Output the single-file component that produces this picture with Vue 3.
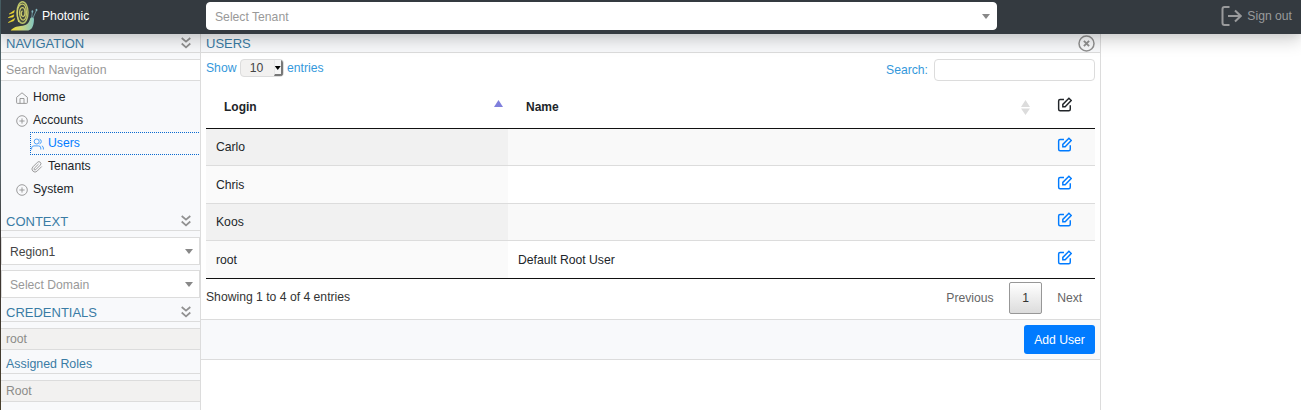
<script setup>
const rows = [
  { login: 'Carlo', name: '' },
  { login: 'Chris', name: '' },
  { login: 'Koos', name: '' },
  { login: 'root', name: 'Default Root User' },
]
const nav = [
  { label: 'Home', icon: 'home' },
  { label: 'Accounts', icon: 'plus' },
  { label: 'Users', icon: 'users', child: true, active: true },
  { label: 'Tenants', icon: 'clip', child: true },
  { label: 'System', icon: 'plus' },
]
</script>

<template>
  <div class="app">
    <header class="topbar">
      <svg class="logo" width="31" height="32" viewBox="7.300 0 31 32" fill="none">
        <defs>
          <linearGradient id="body" x1="0" y1="0" x2="1" y2="0">
            <stop offset="0" stop-color="#f2dc2e" />
            <stop offset="0.5" stop-color="#c5d585" />
            <stop offset="1" stop-color="#82c5c0" />
          </linearGradient>
        </defs>
        <ellipse cx="21.800" cy="12.500" rx="5.500" ry="10.800" fill="#454c40" stroke="#b9c26a" stroke-width="1.400" />
        <path d="M18 22C15.500 15 16 5 21.500 4C26.500 4 27 18 23 20C18.500 21 17.500 8.500 21.500 7.500C25 7.500 25 16 22.500 16.500C20 16.500 20 11 22 11" stroke="#cfce6c" stroke-width="1.200" />
        <path d="M10 30.600C12 27.500 16 26.500 20 26C26 25.500 28 23.500 29.500 18.500C30.500 16.500 33.500 17 33.300 19.500C33 26.500 31 30.600 26 30.600Z" fill="url(#body)" />
        <path d="M31 18L31.700 11.500M32.300 18L35.600 10.500" stroke="#6f9ba3" stroke-width=".9" />
        <ellipse cx="31.700" cy="11.500" rx=".9" ry="1.300" fill="#82b5bd" />
        <ellipse cx="35.800" cy="10" rx=".9" ry="1.300" fill="#82b5bd" />
        <path d="M8.500 14L13.700 10.500L13 12.700ZM7.600 17.600L13.200 14.800L12.500 17ZM7.600 22.500L14 18.500L13 20.800Z" fill="#efd832" stroke="#efd832" stroke-width=".6" />
      </svg>
      <span class="brand">Photonic</span>
      <div class="select tenant"><span>Select Tenant</span><i class="caret"></i></div>
      <a class="signout">
        <svg width="21" height="20" viewBox="0 0 21 20" fill="none" stroke="currentColor" stroke-width="2">
          <path d="M8.500 1H3.500Q1.500 1 1.500 3V17Q1.500 19 3.500 19H8.500M7 10H19.500M14 4.500L19.700 10L14 15.500" />
        </svg>
        <span>Sign out</span>
      </a>
    </header>

    <div class="columns">
      <aside class="sidebar">
        <h2 class="heading">
          NAVIGATION
          <svg class="chev" width="10" height="12" viewBox="0 0 10 12"><path d="M.7 1L5 4.700L9.300 1M.7 6.500L5 10.300L9.300 6.500" /></svg>
        </h2>
        <div class="field search-nav">Search Navigation</div>
        <nav class="tree">
          <a v-for="n in nav" :key="n.label" :class="['node', { child: n.child, active: n.active }]">
            <svg v-if="n.icon === 'home'" class="ico" width="12" height="12" viewBox="0 0 12 12">
              <path d="M.6 5.300L6 .8L11.400 5.300V10.500Q11.400 11.400 10.500 11.400H1.500Q.6 11.400 .6 10.500ZM4 11.400V6.500H8V11.400" />
            </svg>
            <svg v-else-if="n.icon === 'plus'" class="ico" width="12" height="12" viewBox="0 0 12 12">
              <circle cx="6" cy="6" r="5.300" /><path d="M6 3.400V8.600M3.400 6H8.600" />
            </svg>
            <svg v-else-if="n.icon === 'users'" class="ico" width="13" height="12" viewBox="0 0 13 12">
              <circle cx="5.700" cy="3.500" r="2.500" />
              <path d="M.6 11.500V10Q.6 7.900 3 7.900H7.400Q9.800 7.900 9.800 10V11.500M8.500 1.100A2.500 2.500 0 0 1 8.500 5.900M10.800 7.900Q12.400 8.400 12.400 10V11.500" />
            </svg>
            <svg v-else class="ico" width="12" height="12" viewBox="0 0 24 24">
              <path class="clip" d="M21.440 11.050L12.250 20.240A6 6 0 0 1 3.760 11.750L12.950 2.560A4 4 0 0 1 18.610 8.220L9.410 17.410A2 2 0 0 1 6.580 14.580L15.070 6.100" />
            </svg>
            <span>{{ n.label }}</span>
          </a>
        </nav>
        <h2 class="heading">
          CONTEXT
          <svg class="chev" width="10" height="12" viewBox="0 0 10 12"><path d="M.7 1L5 4.700L9.300 1M.7 6.500L5 10.300L9.300 6.500" /></svg>
        </h2>
        <div class="select region"><span class="value">Region1</span><i class="caret"></i></div>
        <div class="select domain"><span>Select Domain</span><i class="caret"></i></div>
        <h2 class="heading cred">
          CREDENTIALS
          <svg class="chev" width="10" height="12" viewBox="0 0 10 12"><path d="M.7 1L5 4.700L9.300 1M.7 6.500L5 10.300L9.300 6.500" /></svg>
        </h2>
        <div class="field disabled">root</div>
        <h3 class="roles">Assigned Roles</h3>
        <div class="field disabled">Root</div>
      </aside>

      <main class="panel">
        <h2 class="heading">
          USERS
          <svg class="close" width="17" height="17" viewBox="0 0 17 17" fill="none" stroke="#919191" stroke-width="1.500">
            <circle cx="8.500" cy="8.500" r="7.500" />
            <path stroke-width="1.900" d="M5.900 5.900L11.100 11.100M11.100 5.900L5.900 11.100" />
          </svg>
        </h2>
        <div class="tools">
          <label class="length">Show <span class="count">10<i></i></span> entries</label>
          <label class="filter">Search: <input type="text" /></label>
        </div>
        <table>
          <thead>
            <tr>
              <th class="c1"><div>Login<svg width="9" height="7" viewBox="0 0 9 7" class="asc"><path d="M0 7L4.500 0L9 7Z" fill="#7f7fdc" /></svg></div></th>
              <th class="c2"><div>Name<svg width="9" height="15" viewBox="0 0 9 15" class="both"><path d="M0 7L4.500 0L9 7ZM0 8.500H9L4.500 15Z" fill="#dcdcdc" /></svg></div></th>
              <th class="c3">
                <svg class="edit" viewBox="0 0 16 16"><path d="M7.200 2.500H3.200Q1.700 2.500 1.700 4V12.700Q1.700 14.200 3.200 14.200H12.200Q13.700 14.200 13.700 12.700V8.600M6 10V7.600L12.300 1.300L14.700 3.700L8.400 10Z" /></svg>
              </th>
            </tr>
          </thead>
          <tbody>
            <tr v-for="r in rows" :key="r.login">
              <td class="c1">{{ r.login }}</td>
              <td class="c2">{{ r.name }}</td>
              <td class="c3">
                <svg class="edit" viewBox="0 0 16 16"><path d="M7.200 2.500H3.200Q1.700 2.500 1.700 4V12.700Q1.700 14.200 3.200 14.200H12.200Q13.700 14.200 13.700 12.700V8.600M6 10V7.600L12.300 1.300L14.700 3.700L8.400 10Z" /></svg>
              </td>
            </tr>
          </tbody>
        </table>
        <div class="foot">
          <span class="info">Showing 1 to 4 of 4 entries</span>
          <div class="pages"><a>Previous</a><a class="current">1</a><a>Next</a></div>
        </div>
        <div class="actions"><button>Add User</button></div>
      </main>
    </div>
  </div>
</template>

<style>
body { background: #fff; overflow: hidden; }
</style>

<style scoped>
* { box-sizing: border-box; }
.app {
  height: 410px;
  display: flex;
  flex-direction: column;
  font: 12.18px/18px "Liberation Sans", Arial, sans-serif;
  color: #212529;
  border-left: 1px solid;
  border-image: linear-gradient(#496066, #56646a 40%, #3b3532 60%, #4a412e) 1;
}
.topbar {
  flex: none;
  height: 34px;
  display: flex;
  align-items: center;
  padding: 0 9px 2px 7px;
  background: #343a40;
  position: relative;
  z-index: 1;
  box-shadow: 0 8px 16px rgba(0, 0, 0, .15), 0 2px 8px rgba(0, 0, 0, .08);
}
.logo { flex: none; margin-right: 3px; overflow: visible; }
.brand { width: 164px; color: #fff; }
.select {
  display: flex;
  align-items: center;
  justify-content: space-between;
  height: 28px;
  padding: 0 6px 0 8px;
  background: #fff;
  border: 1px solid #dcdcdc;
  color: #999;
}
.tenant { width: 791px; border-radius: 4px; border-color: #fff; }
.select span { padding-top: 1px; }
.select .value { color: #444; }
.caret {
  border: 4px solid transparent;
  border-top: 5px solid #888;
  border-bottom: 0;
}
.signout { margin-left: auto; display: flex; align-items: center; gap: 5px; color: #999a9c; }
.columns { flex: 1; min-height: 0; display: flex; }
.sidebar { width: 200px; background: #f8f9fb; border-right: 1px solid #dcdcdc; }
.heading {
  margin: 0;
  height: 19px;
  padding: 1px 9px 0 5px;
  display: flex;
  justify-content: space-between;
  align-items: center;
  font-size: 13px;
  font-weight: 400;
  line-height: 18px;
  color: #3a7ca5;
  background: #f8f9fb;
  border-bottom: 1px solid #dcdcdc;
}
.chev { fill: none; stroke: #919191; stroke-width: 1.7; margin-top: -1px; }
.close { margin-top: -1px; }
.field { height: 22px; line-height: 20px; padding-left: 5px; border: solid #dcdcdc; border-width: 1px 0; background: #fff; color: #999; margin-top: 6px; }
.search-nav { font-size: 12.3px; }
.disabled { background: #f2f1f0; color: #8c8c88; }
.tree { padding-top: 5px; height: 131px; overflow: hidden; }
.node { display: flex; align-items: center; gap: 5px; height: 23px; padding-left: 15px; padding-bottom: 1px; }
.node.child { margin-left: 29px; padding-left: 1px; }
.node.active { margin-right: -1px; color: #007bff; outline: 1px dotted #0a6ad0; outline-offset: -1px; }
.ico { flex: none; width: 12px; margin-top: 2px; fill: none; stroke: #919191; stroke-width: .9; }
.active .ico { width: 13px; margin-right: -1px; stroke: #3b96f8; }
.clip { stroke-width: 1.8; }
.region { margin-top: 6px; }
.domain { margin-top: 5px; }
.cred { margin-top: 5px; }
.roles { margin: 5px 0 0; height: 19px; padding-left: 5px; font-size: 12.4px; font-weight: 400; color: #3a7ca5; border-bottom: 1px solid #dcdcdc; }
.panel { width: 900px; background: #fff; border-right: 1px solid #dcdcdc; }
.panel .heading { padding-right: 5px; }
.tools { display: flex; justify-content: space-between; align-items: flex-start; padding: 6px 5px 0; height: 32px; color: #3498db; }
.length { display: flex; align-items: center; gap: 3.3px; }
.count {
  width: 44px; height: 18px; padding-left: 9px; display: flex; justify-content: space-between;
  background: #f2f1f0; border: 1px solid #dcdcdc; border-radius: 4px; color: #444; line-height: 17px; overflow: hidden;
}
.count i { width: 9px; height: 16px; background: #f5f5f5; border-right: 2px solid #777; border-bottom: 2px solid #777; border-left: 1px solid #e8e8e8; }
.count i::before { content: ""; display: block; margin: 6px 0 0 0; width: 6px; height: 4px; background: #000; clip-path: polygon(0 0, 100% 0, 50% 100%); }
.filter { display: flex; align-items: center; gap: 6px; }
.filter input { width: 161px; height: 22px; border: 1px solid #dcdcdc; border-radius: 4px; background: #fff; }
table { width: 889px; margin-left: 5px; border-collapse: separate; border-spacing: 0; table-layout: fixed; border-bottom: 1px solid #111; }
th, td { padding: 0 10px; text-align: left; }
th { height: 44px; padding: 1px 0 0 18px; border-bottom: 1px solid #111; font-size: 12px; }
th div { display: flex; justify-content: space-between; align-items: center; }
td { height: 38px; }
tbody tr:nth-child(1) td { height: 36px; }
tbody tr:nth-child(3) td { height: 37px; }
.c1 { width: 302px; }
.c2 { width: 527px; }
.c3 { width: 60px; }
.asc { margin: -7px 5px 0 0; }
.both { margin-right: 5px; }
tbody tr + tr td { border-top: 1px solid #dcdcdc; }
tbody tr:nth-child(odd) { background: #f9f9f9; }
tbody tr:nth-child(odd) .c1 { background: #f1f1f1; }
tbody tr:nth-child(even) .c1 { background: #fafafa; }
.c3 { padding: 0 0 0 21px; }
.edit { display: block; width: 15.5px; height: 15.5px; margin: -4px 0 0 .6px; fill: none; stroke: #007bff; stroke-width: 1.5; }
th .edit { stroke: #212529; }
.foot { height: 40px; display: flex; justify-content: space-between; padding: 3px 5px 0; color: #333; }
.info { margin-top: 6px; }
.pages { display: flex; height: 32px; line-height: 32px; color: #666; }
.pages a { padding: 0 12px; margin-left: 3px; }
.pages a:first-child { padding-right: 12.5px; }
.pages a:last-child { padding-right: 12.8px; }
.pages .current { width: 33px; line-height: 30px; border: 1px solid #979797; border-radius: 2px; background: linear-gradient(#fff, #dcdcdc); color: #333; }
.actions { height: 41px; padding: 5px 5px 0; text-align: right; background: #f8f9fb; border: solid #dcdcdc; border-width: 1px 0; }
button { width: 71px; height: 29px; border: 0; border-radius: 3px; padding: 0; background: #007bff; color: #fff; font: inherit; }
</style>
